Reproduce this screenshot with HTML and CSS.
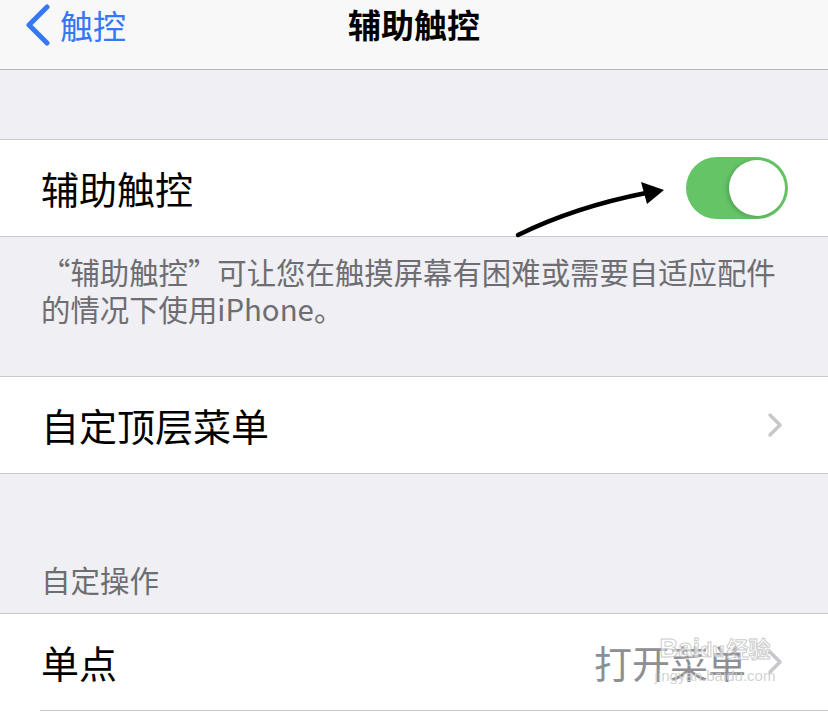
FILE: index.html
```html
<!DOCTYPE html>
<html lang="zh-CN">
<head>
<meta charset="utf-8">
<title>辅助触控</title>
<link rel="stylesheet" href="styles.css">
</head>
<body>
<div class="screen">
  <header class="nav">
    <div class="nav-left">
      <svg class="back-icon" width="28" height="42" viewBox="0 0 28 42"><path d="M23 3 L5 21 L23 39" fill="none" stroke="#3478f6" stroke-width="5" stroke-linecap="round" stroke-linejoin="round"/></svg>
      <span class="back-text">触控</span>
    </div>
    <div class="nav-title">辅助触控</div>
    <div class="nav-right"></div>
  </header>

  <div class="spacer top-spacer"></div>

  <div class="group">
    <div class="row">
      <span class="label">辅助触控</span>
      <div class="switch"><div class="knob"></div></div>
    </div>
  </div>

  <div class="footer">“辅助触控”可让您在触摸屏幕有困难或需要自适应配件<br>的情况下使用iPhone。</div>

  <div class="group">
    <div class="row">
      <span class="label">自定顶层菜单</span>
      <svg class="chev" width="16" height="26" viewBox="0 0 16 26"><path d="M3 3 L13 13 L3 23" fill="none" stroke="#c7c7cc" stroke-width="3.5" stroke-linecap="round" stroke-linejoin="round"/></svg>
    </div>
  </div>

  <div class="section-header">自定操作</div>

  <div class="group group-open">
    <div class="row row-inset">
      <span class="label">单点</span>
      <div class="value-wrap">
        <span class="value">打开菜单</span>
        <svg class="chev" width="16" height="26" viewBox="0 0 16 26"><path d="M3 3 L13 13 L3 23" fill="none" stroke="#c7c7cc" stroke-width="3.5" stroke-linecap="round" stroke-linejoin="round"/></svg>
      </div>
    </div>
  </div>

  <svg class="annot-arrow" width="828" height="715" viewBox="0 0 828 715">
    <path d="M518 235 Q 575 207 646 193" fill="none" stroke="#000" stroke-width="4.5" stroke-linecap="round"/>
    <path d="M664 190 L641 182 L647 204 Z" fill="#000"/>
  </svg>

  <div class="watermark">
    <div class="wm-logo"><span class="wm-bai">Bai</span><span class="wm-paw">du</span><span class="wm-jy">经验</span></div>
    <div class="wm-url">jingyan.baidu.com</div>
  </div>
</div>
</body>
</html>
```

FILE: styles.css
```css
* { box-sizing: border-box; }
html, body {
  margin: 0;
  padding: 0;
  background: #ffffff;
}
body {
  font-family: "Noto Sans CJK SC", "Noto Sans", sans-serif;
  width: 828px;
  height: 715px;
  overflow: hidden;
}
.screen {
  position: relative;
  width: 828px;
  height: 715px;
  background: #efeff4;
  display: flex;
  flex-direction: column;
}
.nav {
  height: 70px;
  flex: none;
  background: #f8f8f8;
  border-bottom: 1px solid #b4b4b6;
  display: grid;
  grid-template-columns: 1fr auto 1fr;
  align-items: start;
  padding-top: 4px;
}
.nav-left {
  display: flex;
  align-items: center;
  padding-left: 24px;
}
.back-icon { flex: none; }
.back-text {
  color: #3478f6;
  font-size: 33px;
  line-height: 40px;
  margin-left: 8px;
}
.nav-title {
  font-size: 33px;
  font-weight: 700;
  line-height: 40px;
  color: #000;
}
.spacer.top-spacer {
  height: 69px;
  flex: none;
}
.group {
  background: #fff;
  border-top: 1px solid #c8c7cc;
  border-bottom: 1px solid #c8c7cc;
  flex: none;
}
.row {
  height: 96px;
  display: flex;
  align-items: center;
  justify-content: space-between;
  padding-left: 41px;
  padding-right: 40px;
}
.label {
  font-size: 38px;
  color: #000;
  line-height: 44px;
}
.switch {
  width: 102px;
  height: 62px;
  border-radius: 31px;
  background: #65c466;
  display: flex;
  align-items: center;
  justify-content: flex-end;
  padding-right: 3px;
}
.knob {
  width: 56px;
  height: 56px;
  border-radius: 50%;
  background: #fff;
  box-shadow: -2px 1px 4px rgba(0,0,0,0.18);
}
.chev { flex: none; margin-right: 5px; }
.footer {
  height: 139px;
  flex: none;
  padding: 16px 0 0 41px;
  font-size: 29.4px;
  line-height: 37px;
  color: #6d6d72;
}
.section-header {
  height: 139px;
  flex: none;
  padding: 0 0 16px 41px;
  display: flex;
  align-items: flex-end;
  font-size: 29.5px;
  line-height: 36px;
  color: #6d6d72;
}
.group-open {
  border-bottom: none;
  flex: 1;
}
.row-inset {
  height: 97px;
  border-bottom: 1px solid #c8c7cc;
  margin-left: 40px;
  padding-left: 1px;
}
.value-wrap {
  display: flex;
  align-items: center;
  gap: 21px;
}
.value {
  font-size: 38px;
  line-height: 44px;
  color: #8e8e93;
}
.annot-arrow {
  position: absolute;
  left: 0;
  top: 0;
  pointer-events: none;
}
.watermark {
  position: absolute;
  left: 640px;
  top: 632px;
  width: 150px;
  display: flex;
  flex-direction: column;
  align-items: center;
  color: rgba(200,200,200,0.75);
  pointer-events: none;
}
.wm-logo {
  display: flex;
  align-items: baseline;
  font-family: "Liberation Sans", sans-serif;
  font-size: 26px;
  font-weight: 700;
  line-height: 30px;
  color: rgba(255,255,255,0.6);
  -webkit-text-stroke: 1px rgba(190,190,190,0.8);
}
.wm-paw { font-size: 20px; }
.wm-jy {
  font-family: "Noto Sans CJK SC", sans-serif;
  font-size: 22px;
  margin-left: 2px;
}
.wm-url {
  font-family: "Liberation Sans", sans-serif;
  font-size: 15px;
  line-height: 18px;
  color: rgba(205,205,205,0.9);
  margin-top: 2px;
}
```
